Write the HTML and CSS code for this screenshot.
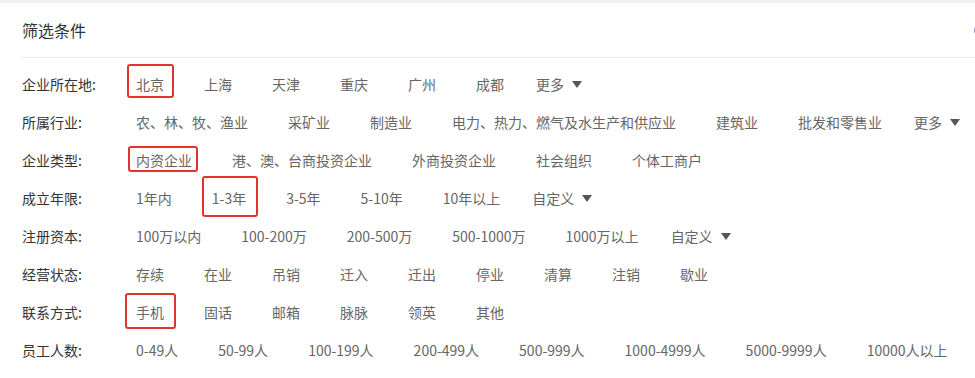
FILE: index.html
```html
<!DOCTYPE html>
<html lang="zh-CN">
<head>
    <meta charset="UTF-8">
    <title>筛选条件</title>
    <link rel="stylesheet" href="styles.css">
</head>
<body>
    <div class="top-band"></div>
    <div class="panel">
        <div class="panel-head">
            <span class="panel-title">筛选条件</span>
            <span class="head-icon"></span>
        </div>

        <div class="filters">
            <div class="filter-row">
                <span class="label">企业所在地:</span>
                <span class="opt"><span class="mark mark-city"></span>北京</span>
                <span class="opt">上海</span>
                <span class="opt">天津</span>
                <span class="opt">重庆</span>
                <span class="opt">广州</span>
                <span class="opt">成都</span>
                <span class="opt more">更多 <i class="caret"></i></span>
            </div>
            <div class="filter-row">
                <span class="label">所属行业:</span>
                <span class="opt">农、林、牧、渔业</span>
                <span class="opt">采矿业</span>
                <span class="opt">制造业</span>
                <span class="opt">电力、热力、燃气及水生产和供应业</span>
                <span class="opt">建筑业</span>
                <span class="opt">批发和零售业</span>
                <span class="opt more">更多 <i class="caret"></i></span>
            </div>
            <div class="filter-row">
                <span class="label">企业类型:</span>
                <span class="opt"><span class="mark mark-type"></span>内资企业</span>
                <span class="opt">港、澳、台商投资企业</span>
                <span class="opt">外商投资企业</span>
                <span class="opt">社会组织</span>
                <span class="opt">个体工商户</span>
            </div>
            <div class="filter-row">
                <span class="label">成立年限:</span>
                <span class="opt">1年内</span>
                <span class="opt"><span class="mark mark-year"></span>1-3年</span>
                <span class="opt">3-5年</span>
                <span class="opt">5-10年</span>
                <span class="opt">10年以上</span>
                <span class="opt more">自定义 <i class="caret"></i></span>
            </div>
            <div class="filter-row">
                <span class="label">注册资本:</span>
                <span class="opt">100万以内</span>
                <span class="opt">100-200万</span>
                <span class="opt">200-500万</span>
                <span class="opt">500-1000万</span>
                <span class="opt">1000万以上</span>
                <span class="opt more">自定义 <i class="caret"></i></span>
            </div>
            <div class="filter-row">
                <span class="label">经营状态:</span>
                <span class="opt">存续</span>
                <span class="opt">在业</span>
                <span class="opt">吊销</span>
                <span class="opt">迁入</span>
                <span class="opt">迁出</span>
                <span class="opt">停业</span>
                <span class="opt">清算</span>
                <span class="opt">注销</span>
                <span class="opt">歇业</span>
            </div>
            <div class="filter-row">
                <span class="label">联系方式:</span>
                <span class="opt"><span class="mark mark-contact"></span>手机</span>
                <span class="opt">固话</span>
                <span class="opt">邮箱</span>
                <span class="opt">脉脉</span>
                <span class="opt">领英</span>
                <span class="opt">其他</span>
            </div>
            <div class="filter-row">
                <span class="label">员工人数:</span>
                <span class="opt">0-49人</span>
                <span class="opt">50-99人</span>
                <span class="opt">100-199人</span>
                <span class="opt">200-499人</span>
                <span class="opt">500-999人</span>
                <span class="opt">1000-4999人</span>
                <span class="opt">5000-9999人</span>
                <span class="opt">10000人以上</span>
            </div>
        </div>
    </div>
</body>
</html>
```

FILE: styles.css
```css
body {
    margin: 0;
    background-color: #fff;
    font-family: "Microsoft YaHei", "Noto Sans CJK SC", sans-serif;
    font-size: 14px;
    color: #333;
    overflow: hidden;
}

.top-band {
    height: 3px;
    background-color: #eff1f5;
}

.panel {
    padding-left: 22px;
}

.panel-head {
    display: flex;
    align-items: center;
    height: 54px;
    border-bottom: 1px solid #e8e8e8;
}
.panel-title {
    font-size: 16px;
    color: #333;
}
.head-icon {
    width: 8px;
    height: 9px;
    margin-left: auto;
    margin-right: -9px;
    border: 1.5px solid #8f86ea;
    border-radius: 50%;
}

.filters {
    padding-top: 7px;
}

.filter-row {
    display: flex;
    align-items: center;
    height: 38px;
    white-space: nowrap;
}
.label {
    width: 114px;
    flex-shrink: 0;
    color: #333;
    line-height: 20px;
}
.opt {
    position: relative;
    margin-right: 40px;
    color: #666;
    line-height: 20px;
}
.more {
    display: flex;
    align-items: center;
    margin-left: -8px;
}
.caret {
    display: inline-block;
    width: 0;
    height: 0;
    margin-left: 8px;
    border-left: 5px solid transparent;
    border-right: 5px solid transparent;
    border-top: 7px solid #555;
}

/* red highlight frames */
.mark {
    position: absolute;
    border: 2px solid #e3332c;
    border-radius: 3px;
}
.mark-city { top: -10px; bottom: -4px; left: -9px; right: -10px; }
.mark-type { top: -4px; bottom: -2px; left: -8px; right: -6px; }
.mark-year { top: -12px; bottom: -9px; left: -10px; right: -12px; }
.mark-contact { top: -9px; bottom: -7px; left: -11px; right: -12px; }
```
